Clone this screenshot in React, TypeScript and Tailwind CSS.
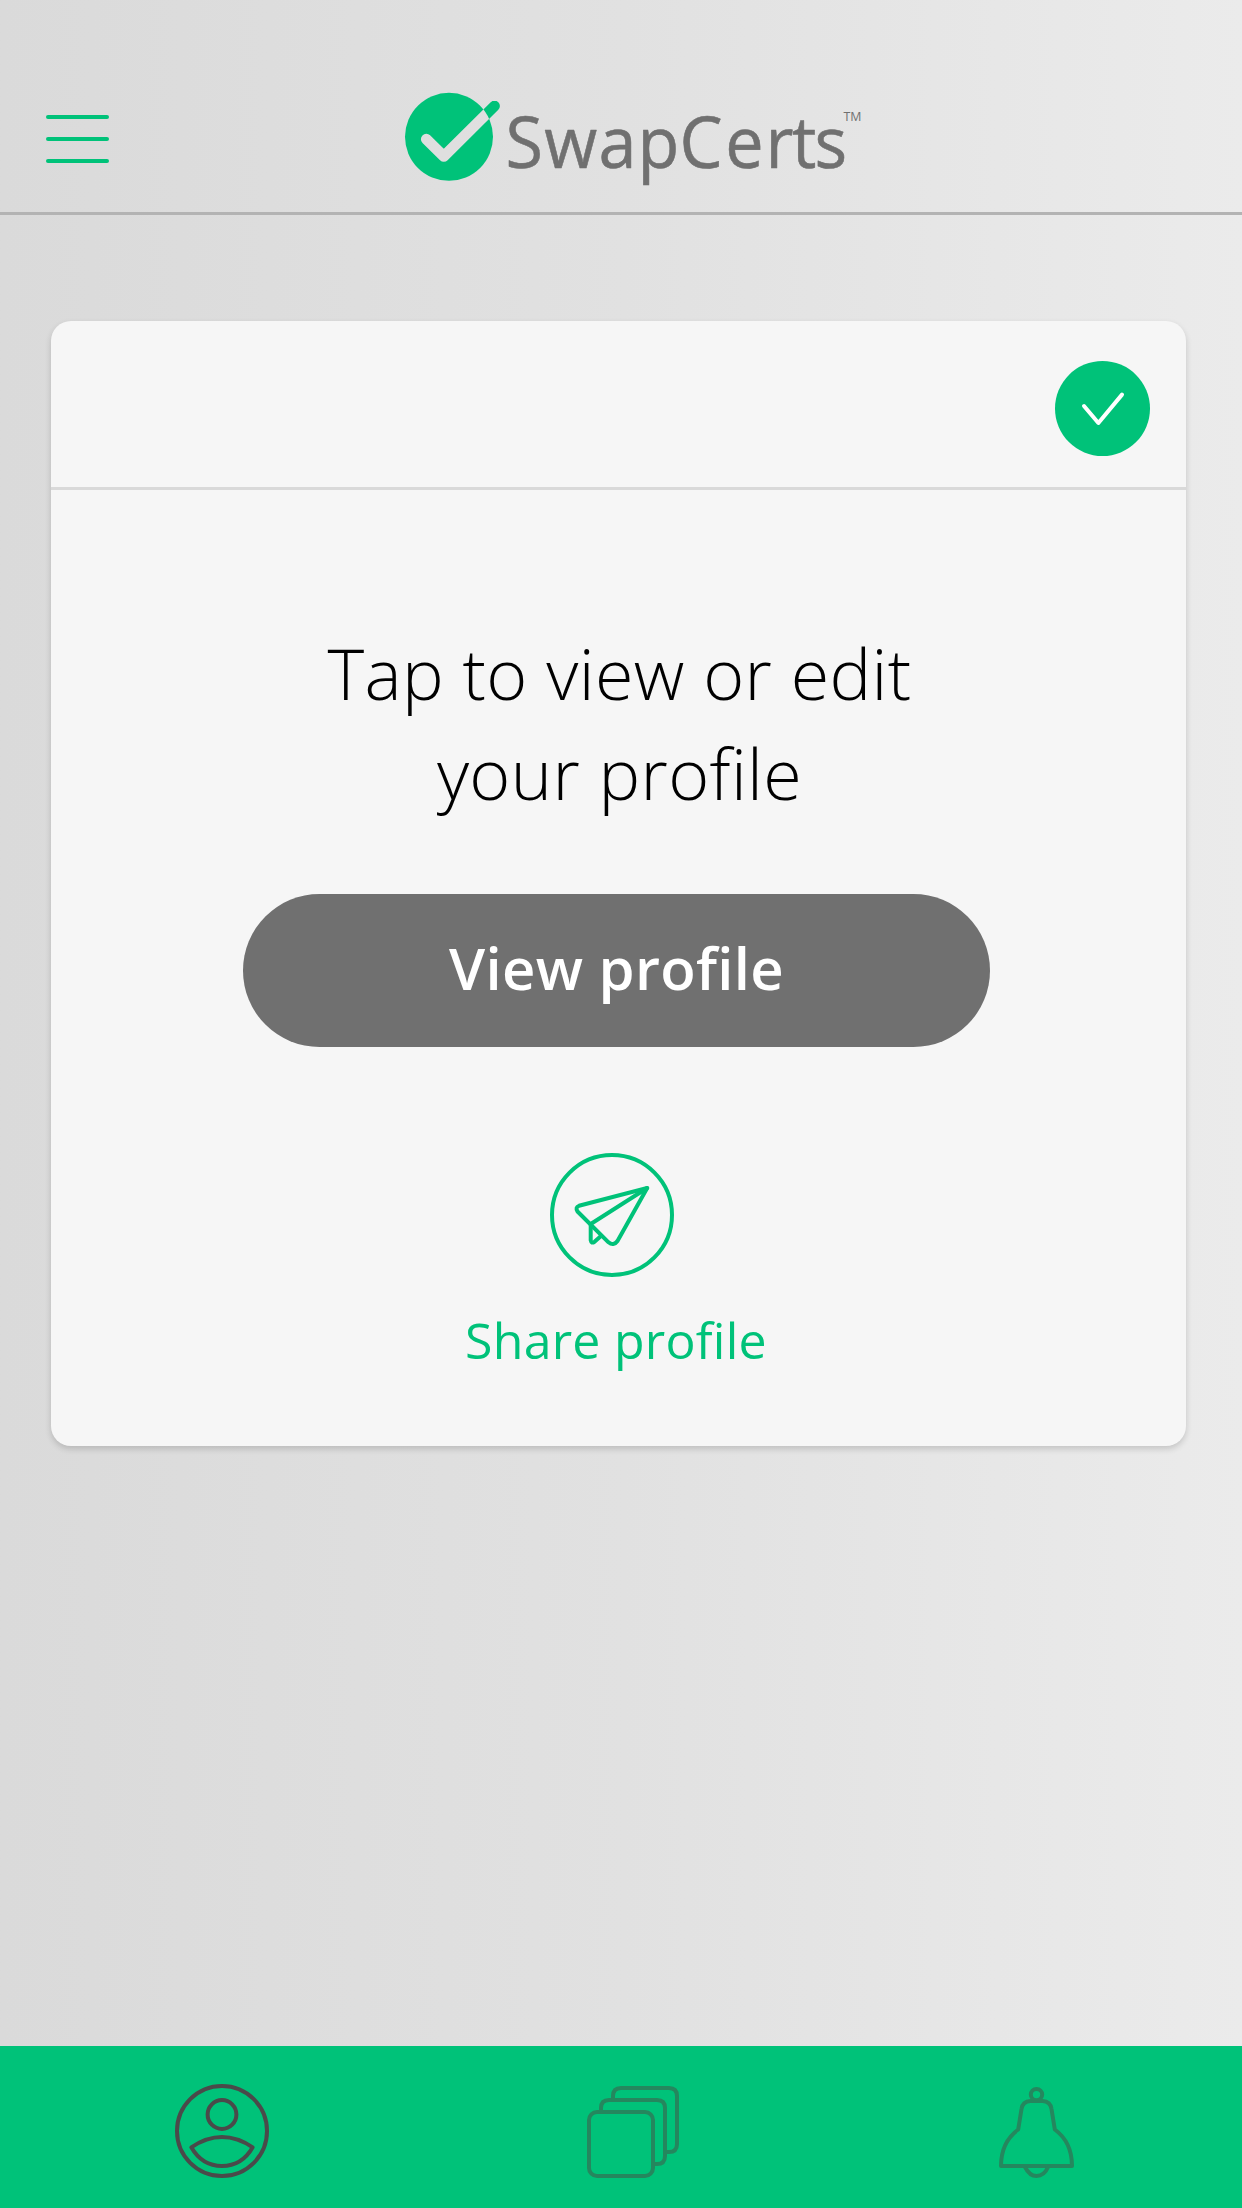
function MenuIcon() {
  return (
    <span className="flex w-[63px] flex-col gap-[18px]">
      <span className="h-1 rounded-full bg-[#00c279]" />
      <span className="h-1 rounded-full bg-[#00c279]" />
      <span className="h-1 rounded-full bg-[#00c279]" />
    </span>
  );
}

function Logo() {
  return (
    <svg width="460" height="104" viewBox="403 88 460 104" role="img" aria-label="SwapCerts">
      <defs>
        <mask id="cut-check">
          <rect x="403" y="88" width="460" height="104" fill="#fff" />
          <path d="M426.3 139.2 443.8 156.3 494.5 106" fill="none" stroke="#000" strokeWidth="10.8" strokeLinecap="round" strokeLinejoin="round" />
        </mask>
        <mask id="cut-disc">
          <rect x="403" y="88" width="460" height="104" fill="#fff" />
          <circle cx="449" cy="136.8" r="44" fill="#000" />
        </mask>
      </defs>
      <circle cx="449" cy="136.8" r="44" fill="#00c279" mask="url(#cut-check)" />
      <g mask="url(#cut-disc)">
        <path d="M426.3 139.2 443.8 156.3 494.5 106" fill="none" stroke="#00c279" strokeWidth="10.8" strokeLinecap="round" strokeLinejoin="round" />
      </g>
      <text
        x="532 573 630 671 715.4 763.5 805.8 833.8 857.4"
        y="168"
        transform="scale(0.95 1)"
        className="fill-[#707070] stroke-[#707070] font-['Open_Sans',sans-serif] text-[72px] [stroke-linejoin:round] [stroke-width:0.6]"
      >
        SwapCerts
      </text>
      <text
        x="843.5"
        y="121"
        textLength="18"
        lengthAdjust="spacingAndGlyphs"
        className="fill-[#707070] font-['Open_Sans',sans-serif] text-[13.5px] font-medium"
      >
        TM
      </text>
    </svg>
  );
}

function VerifiedBadge() {
  return (
    <span className="flex size-[95px] rounded-full bg-[#00c279]">
      <svg width="95" height="95" viewBox="1055 361 95 95" fill="none" stroke="#fff" strokeWidth="4" strokeLinecap="round" strokeLinejoin="round">
        <path d="M1084 406 1098.4 423 1122 394.6" />
      </svg>
    </span>
  );
}

function ShareIcon() {
  return (
    <svg width="124" height="124" viewBox="550 1153 124 124" fill="none" stroke="#00c279" strokeWidth="4" strokeLinecap="round" strokeLinejoin="round">
      <circle cx="612" cy="1215" r="60" />
      <path d="M647.2 1188 579 1205.8Q575 1207.2 577.5 1211.5L608.5 1242.3Q613.5 1246.5 617.5 1241Z" />
      <path d="M647.2 1188 590.7 1224V1240.3Q591.3 1244 594.5 1241.8L601 1236" />
    </svg>
  );
}

function ProfileIcon() {
  return (
    <svg width="94" height="94" viewBox="175 2084 94 94" fill="none" stroke="#4a4a4a" strokeWidth="4" strokeLinejoin="round">
      <circle cx="222" cy="2131" r="45" />
      <circle cx="222" cy="2114.5" r="14.4" />
      <path d="M191.3 2147.3Q222 2126.7 252.7 2147.3C246 2159 235 2166 222 2166S198 2159 191.3 2147.3Z" />
    </svg>
  );
}

function CertificatesIcon() {
  return (
    <svg width="92" height="92" viewBox="587 2086 92 92" fill="none" stroke="#25875e" strokeWidth="4">
      <rect x="589" y="2112" width="64" height="64" rx="8" />
      <path d="M601 2110V2108Q601 2100 609 2100H657Q665 2100 665 2108V2156Q665 2164 657 2164H655" />
      <path d="M613 2098V2096Q613 2088 621 2088H669Q677 2088 677 2096V2144Q677 2152 669 2152H667" />
    </svg>
  );
}

function BellIcon() {
  return (
    <svg width="75" height="92" viewBox="999 2086 75 92" fill="none" stroke="#25875e" strokeWidth="4" strokeLinejoin="round">
      <circle cx="1036.5" cy="2094.6" r="5.7" />
      <path d="M1030.5 2101H1042.5Q1050.5 2101.5 1051.5 2109L1054.8 2129.5C1065 2137 1072 2149 1072 2166H1001C1001 2149 1008 2137 1018.2 2129.5L1021.5 2109Q1022.5 2101.5 1030.5 2101Z" />
      <path d="M1025 2167C1028 2173 1032 2176 1036.5 2176S1045.5 2173 1048 2167" />
    </svg>
  );
}

export default function App() {
  return (
    <div className="flex h-[2208px] w-[1242px] flex-col bg-linear-to-r from-[#dadada] via-[#e1e1e1] to-[#ebebeb] font-['Open_Sans',sans-serif]">
      <header className="flex h-[215px] items-start border-b-[3px] border-[#b3b3b3] pl-[46px]">
        <button aria-label="Menu" className="mt-[115px]">
          <MenuIcon />
        </button>
        <div className="mt-[88px] ml-[294px]">
          <Logo />
        </div>
      </header>

      <main className="flex-1 pt-[106px] pr-14 pl-[51px]">
        <section className="h-[1125px] rounded-[20px] bg-[#f6f6f6] shadow-[0_3px_6px_rgba(0,0,0,0.16)]">
          <div className="flex h-[169px] justify-end border-b-[3px] border-[#d9d9d9] pt-10 pr-9">
            <VerifiedBadge />
          </div>
          <div className="flex flex-col items-center pt-[133px]">
            <p className="pl-0.5 text-center text-[70px] leading-[100px] font-light tracking-[0.35px] text-black">
              Tap to view or edit
              <br />
              your profile
            </p>
            <button className="mt-[71px] mr-1 h-[153px] w-[747px] rounded-full bg-[#707070] pb-1.5 text-[58px] font-semibold tracking-[0.3px] text-white">
              View profile
            </button>
            <button className="mt-[106px] mr-[5px] flex flex-col items-center text-[50px] leading-[60px] tracking-[0.25px] text-[#00c279]">
              <span className="mr-2">
                <ShareIcon />
              </span>
              <span className="mt-[33px]">Share profile</span>
            </button>
          </div>
        </section>
      </main>

      <nav className="flex h-[162px] items-start justify-between bg-[#00c279] pt-[38px] pr-[168px] pl-[175px]">
        <ProfileIcon />
        <span className="mt-0.5 mr-0.5">
          <CertificatesIcon />
        </span>
        <span className="mt-0.5">
          <BellIcon />
        </span>
      </nav>
    </div>
  );
}
